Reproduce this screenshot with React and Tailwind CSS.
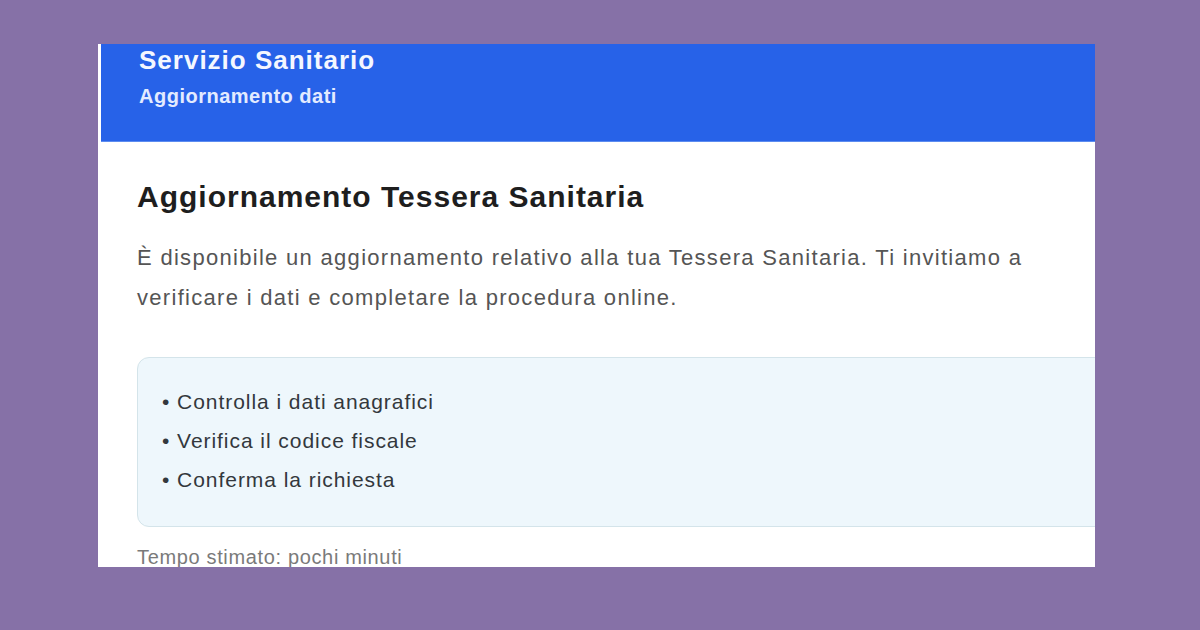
export default function App() {
    const steps = [
        'Controlla i dati anagrafici',
        'Verifica il codice fiscale',
        'Conferma la richiesta',
    ];

    return (
        <div
            className="w-[1200px] h-[630px] bg-[#8671a7] pt-[44px] pl-[98px] overflow-hidden"
            style={{ fontFamily: '"Liberation Sans", Arial, sans-serif' }}
        >
            <div className="w-[997px] h-[523px] bg-white overflow-hidden">
                {/* header band */}
                <div className="ml-[3px] h-[98px] bg-[#2762e8] border-b border-[#5c8cf0] pl-[38px]">
                    <div className="text-[26px] leading-[32px] font-bold tracking-[1px] text-[#f4f7ff]">
                        Servizio Sanitario
                    </div>
                    <div className="mt-[6px] text-[20px] leading-[28px] font-semibold tracking-[0.5px] text-[#e3ebff]">
                        Aggiornamento dati
                    </div>
                </div>

                <div className="pl-[39px] w-[1040px] shrink-0">
                    <h1 className="mt-[37px] text-[30px] leading-[36px] font-bold tracking-[1px] text-[#1e1e1e]">
                        Aggiornamento Tessera Sanitaria
                    </h1>
                    <p className="mt-[23px] w-[905px] text-[22px] leading-[40px] tracking-[1.3px] text-[#555555]">
                        È disponibile un aggiornamento relativo alla tua Tessera Sanitaria. Ti invitiamo a verificare i dati e completare la procedura online.
                    </p>

                    <div className="mt-[39px] h-[170px] rounded-[12px] border border-[#d4e4ea] bg-[#eef7fc] pl-[24px] pt-[24px]">
                        <ul>
                            {steps.map((step) => (
                                <li key={step} className="text-[21px] leading-[39px] tracking-[0.95px] text-[#33383d]">
                                    • {step}
                                </li>
                            ))}
                        </ul>
                    </div>

                    <div className="mt-[16px] text-[20px] leading-[28px] tracking-[0.65px] text-[#7a7a7a]">
                        Tempo stimato: pochi minuti
                    </div>
                </div>
            </div>
        </div>
    );
}
